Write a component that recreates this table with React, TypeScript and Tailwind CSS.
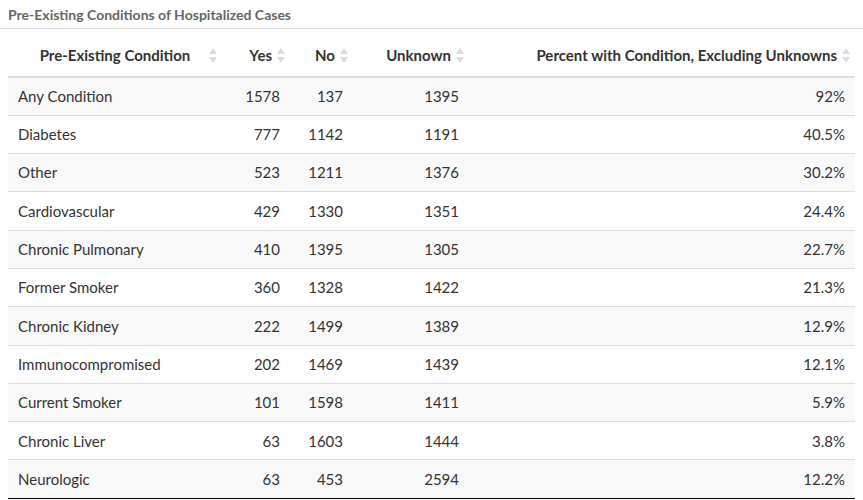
import React from "react";

type Row = {
  condition: string;
  yes: number;
  no: number;
  unknown: number;
  percent: string;
};

const rows: Row[] = [
  { condition: "Any Condition", yes: 1578, no: 137, unknown: 1395, percent: "92%" },
  { condition: "Diabetes", yes: 777, no: 1142, unknown: 1191, percent: "40.5%" },
  { condition: "Other", yes: 523, no: 1211, unknown: 1376, percent: "30.2%" },
  { condition: "Cardiovascular", yes: 429, no: 1330, unknown: 1351, percent: "24.4%" },
  { condition: "Chronic Pulmonary", yes: 410, no: 1395, unknown: 1305, percent: "22.7%" },
  { condition: "Former Smoker", yes: 360, no: 1328, unknown: 1422, percent: "21.3%" },
  { condition: "Chronic Kidney", yes: 222, no: 1499, unknown: 1389, percent: "12.9%" },
  { condition: "Immunocompromised", yes: 202, no: 1469, unknown: 1439, percent: "12.1%" },
  { condition: "Current Smoker", yes: 101, no: 1598, unknown: 1411, percent: "5.9%" },
  { condition: "Chronic Liver", yes: 63, no: 1603, unknown: 1444, percent: "3.8%" },
  { condition: "Neurologic", yes: 63, no: 453, unknown: 2594, percent: "12.2%" },
];

function SortIcon() {
  return (
    <svg
      className="absolute right-[5px] top-[19px]"
      width="8"
      height="15"
      viewBox="0 0 8 15"
    >
      <path d="M4 0 L8 6 L0 6 Z" fill="#dcdcdc" />
      <path d="M0 9 L8 9 L4 15 Z" fill="#dcdcdc" />
    </svg>
  );
}

function HeaderCell({ label, align }: { label: string; align: "center" | "right" }) {
  return (
    <th
      className={`relative h-[48px] border-b-2 border-[#dddddd] pl-[10px] pt-[5px] font-bold text-[15px] text-[#333333] ${
        align === "center" ? "text-center pr-[10px]" : "text-right pr-[18px]"
      }`}
    >
      {label}
      <SortIcon />
    </th>
  );
}

export default function App() {
  return (
    <div
      className="w-[863px] h-[500px] bg-white text-[#333333]"
      style={{ fontFamily: "Lato, 'Open Sans', sans-serif" }}
    >
      <div className="h-[29px] border-b border-[#dddddd] pl-[8px] pt-[7px] text-[14px] font-bold text-[#666666] leading-[16px]">
        Pre-Existing Conditions of Hospitalized Cases
      </div>
      <div className="px-[8px]">
        <table className="w-[847px] border-collapse table-fixed border-b border-black">
          <colgroup>
            <col className="w-[214px]" />
            <col className="w-[68px]" />
            <col className="w-[63px]" />
            <col className="w-[116px]" />
            <col />
          </colgroup>
          <thead>
            <tr>
              <HeaderCell label="Pre-Existing Condition" align="center" />
              <HeaderCell label="Yes" align="right" />
              <HeaderCell label="No" align="right" />
              <HeaderCell label="Unknown" align="right" />
              <HeaderCell label="Percent with Condition, Excluding Unknowns" align="right" />
            </tr>
          </thead>
          <tbody className="text-[15px]">
            {rows.map((row, i) => (
              <tr
                key={row.condition}
                className={`h-[38.3px] ${i > 0 ? "border-t border-[#dddddd]" : ""} ${
                  i % 2 === 0 ? "bg-[#f9f9f9]" : "bg-white"
                }`}
              >
                <td className="px-[10px] text-left">{row.condition}</td>
                <td className="px-[10px] text-right">{row.yes}</td>
                <td className="px-[10px] text-right">{row.no}</td>
                <td className="px-[10px] text-right">{row.unknown}</td>
                <td className="px-[10px] text-right">{row.percent}</td>
              </tr>
            ))}
          </tbody>
        </table>
      </div>
    </div>
  );
}
